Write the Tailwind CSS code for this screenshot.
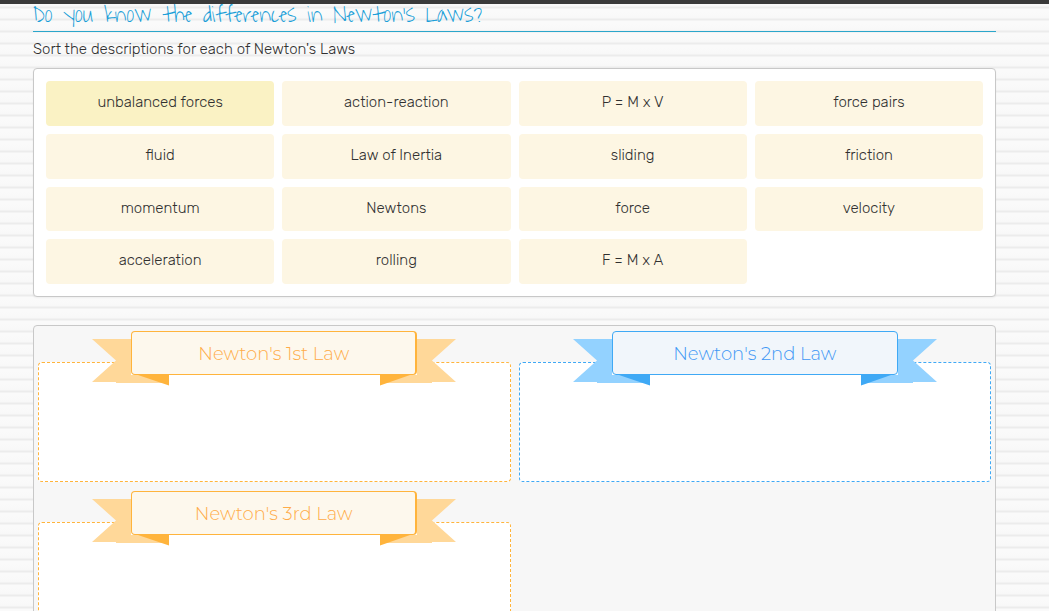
<!DOCTYPE html>
<html lang="en" class="[scrollbar-width:none]">
<head>
<meta charset="utf-8">
<meta name="viewport" content="width=device-width, initial-scale=1">
<title>Newton's Laws sorting activity</title>
<script src="https://cdn.jsdelivr.net/npm/@tailwindcss/browser@4"></script>
</head>
<body class="min-h-screen border-t-4 border-[#3a3a3a] bg-[#fafafa] bg-[repeating-linear-gradient(180deg,#fafafa_0px,#f8f8f8_6px,#ececec_7px,#ececec_8px,#fafafa_9px,#fafafa_12px)] font-['Rubik','Roboto',sans-serif] font-light text-[#303030]">
<svg class="hidden" aria-hidden="true">
  <symbol id="ribbon" viewBox="0 0 364 55">
    <path fill="currentColor" d="M0 8H39V44H325V8H364L340 29.500L364 51H340V52H294L288 44H76L70 52H24V51H0L24 29.500Z"/>
    <path d="M46 44H77V54.500ZM318 44H288V54.500Z"/>
  </symbol>
</svg>
<main class="pb-6 pl-[33px] pr-[53px]">
  <h1 class="h-7 border-b border-[#2ba6cb] font-['Waiting_for_the_Sunrise','Shadows_Into_Light',cursive] text-2xl font-normal leading-[22px] text-[#1a9fd8]">Do you know the differences in Newton's Laws?</h1>
  <p class="mt-2 text-[15px] leading-[19px]">Sort the descriptions for each of Newton's Laws</p>

  <section aria-label="Descriptions" class="mt-[9px] grid min-h-[229px] auto-rows-fr grid-cols-4 gap-2 rounded border border-[#c8c8c8] bg-white p-3 text-[15px] shadow-xs">
    <button aria-pressed="true" class="rounded bg-[#faf2c4] pb-0.5">unbalanced forces</button>
    <button class="rounded bg-[#fdf6e3] pb-0.5">action-reaction</button>
    <button class="rounded bg-[#fdf6e3] pb-0.5">P = M x V</button>
    <button class="rounded bg-[#fdf6e3] pb-0.5">force pairs</button>
    <button class="rounded bg-[#fdf6e3] pb-0.5">fluid</button>
    <button class="rounded bg-[#fdf6e3] pb-0.5">Law of Inertia</button>
    <button class="rounded bg-[#fdf6e3] pb-0.5">sliding</button>
    <button class="rounded bg-[#fdf6e3] pb-0.5">friction</button>
    <button class="rounded bg-[#fdf6e3] pb-0.5">momentum</button>
    <button class="rounded bg-[#fdf6e3] pb-0.5">Newtons</button>
    <button class="rounded bg-[#fdf6e3] pb-0.5">force</button>
    <button class="rounded bg-[#fdf6e3] pb-0.5">velocity</button>
    <button class="rounded bg-[#fdf6e3] pb-0.5">acceleration</button>
    <button class="rounded bg-[#fdf6e3] pb-0.5">rolling</button>
    <button class="rounded bg-[#fdf6e3] pb-0.5">F = M x A</button>
  </section>

  <section aria-label="Newton's Laws" class="mt-7 grid grid-cols-2 gap-x-2 gap-y-[9px] rounded border border-[#c8c8c8] bg-[#f7f7f7] px-1 py-[5px] font-['Montserrat','Inter',sans-serif] text-lg">
    <div class="flex flex-col items-center">
      <div class="relative z-10 -mb-[13px] w-[286px]">
        <svg class="absolute -left-[39px] top-0 h-[55px] w-[364px] fill-[#ffb43c] text-[#ffd899]" aria-hidden="true"><use href="#ribbon"/></svg>
        <h2 class="relative h-11 rounded border border-r-2 border-[#ffb43c] bg-[#fdf8ed] text-center leading-11 text-[#ffac48]">Newton's 1st Law</h2>
      </div>
      <div class="h-[120px] w-full rounded border border-dashed border-[#ffb43c] bg-white"></div>
    </div>
    <div class="flex flex-col items-center">
      <div class="relative z-10 -mb-[13px] w-[286px]">
        <svg class="absolute -left-[39px] top-0 h-[55px] w-[364px] fill-[#3fa9f5] text-[#93d2ff]" aria-hidden="true"><use href="#ribbon"/></svg>
        <h2 class="relative h-11 rounded border border-[#3fa9f5] bg-[#f1f6fb] text-center leading-11 text-[#3f98f5]">Newton's 2nd Law</h2>
      </div>
      <div class="h-[120px] w-full rounded border border-dashed border-[#3fa9f5] bg-white"></div>
    </div>
    <div class="flex flex-col items-center">
      <div class="relative z-10 -mb-[13px] w-[286px]">
        <svg class="absolute -left-[39px] top-0 h-[55px] w-[364px] fill-[#ffb43c] text-[#ffd899]" aria-hidden="true"><use href="#ribbon"/></svg>
        <h2 class="relative h-11 rounded border border-r-2 border-[#ffb43c] bg-[#fdf8ed] text-center leading-11 text-[#ffac48]">Newton's 3rd Law</h2>
      </div>
      <div class="h-[120px] w-full rounded border border-dashed border-[#ffb43c] bg-white"></div>
    </div>
  </section>
</main>
</body>
</html>
